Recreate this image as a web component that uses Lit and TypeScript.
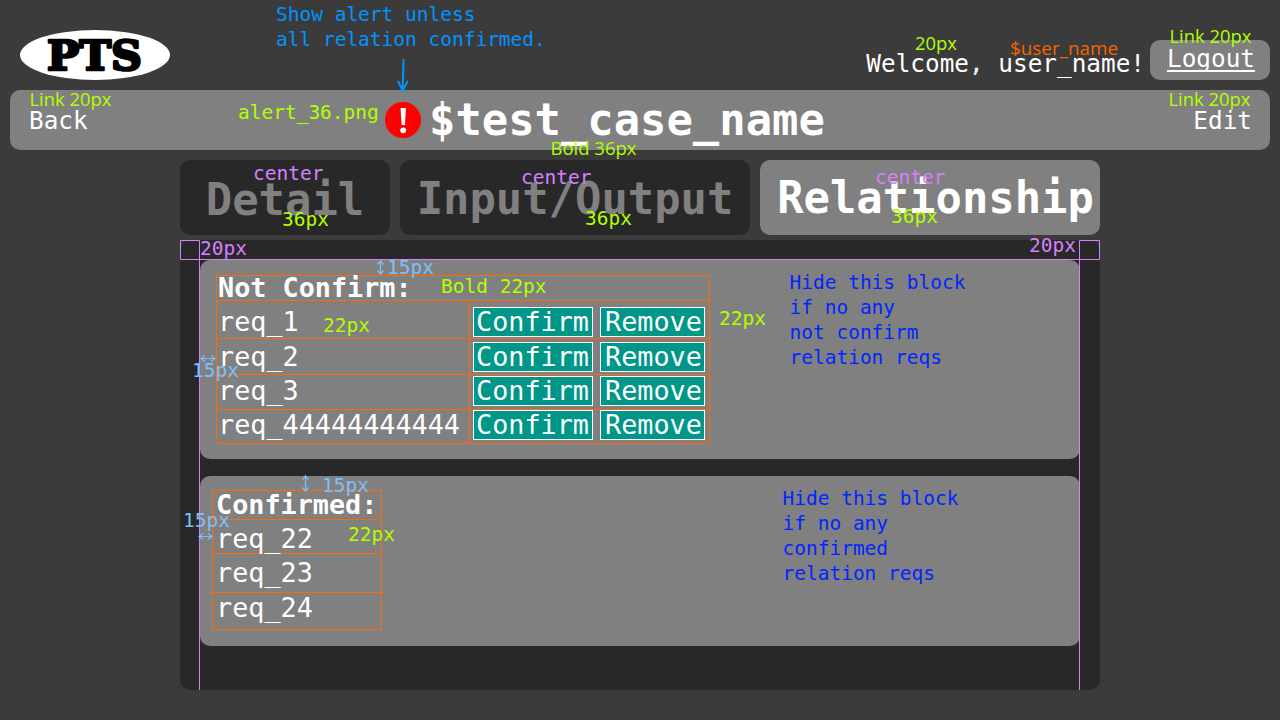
import { LitElement, html, svg, css } from "lit";
import { customElement } from "lit/decorators.js";

type Note = [text: string, x: number, y: number, color: string];

const LIME = "#b2ff00";
const PURPLE = "#d680ff";
const SKY = "#7cc0fb";
const BLUE = "#0026ff";
const AZURE = "#0094ff";
const PITCH = 11.73;

const monoNotes: Note[] = [
  ["Show alert unless", 276, 21, AZURE],
  ["all relation confirmed.", 276, 46, AZURE],
  ["alert_36.png", 238, 119, LIME],
  ["center", 253, 180, PURPLE],
  ["center", 521, 184, PURPLE],
  ["center", 875, 184, PURPLE],
  ["36px", 282, 226, LIME],
  ["36px", 585, 225, LIME],
  ["36px", 891, 223, LIME],
  ["20px", 200, 255, PURPLE],
  ["20px", 1029, 252, PURPLE],
  ["15px", 387, 274, SKY],
  ["Bold 22px", 441, 293, LIME],
  ["22px", 323, 332, LIME],
  ["22px", 719, 325, LIME],
  ["15px", 192, 377, SKY],
  ["Hide this block", 789.5, 289, BLUE],
  ["if no any", 789.5, 314, BLUE],
  ["not confirm", 789.5, 339, BLUE],
  ["relation reqs", 789.5, 364, BLUE],
  ["Hide this block", 782.5, 505, BLUE],
  ["if no any", 782.5, 530, BLUE],
  ["confirmed", 782.5, 555, BLUE],
  ["relation reqs", 782.5, 580, BLUE],
  ["15px", 322, 492, SKY],
  ["15px", 183, 527, SKY],
  ["22px", 348, 541, LIME],
];

const sansNotes: [...Note, number][] = [
  ["Link 20px", 29.5, 106, LIME, 82],
  ["20px", 915, 50, LIME, 42],
  ["$user_name", 1010, 55, "#f26500", 108],
  ["Link 20px", 1169.5, 43, LIME, 82],
  ["Link 20px", 1168.5, 106, LIME, 82],
  ["Bold 36px", 550.5, 155, LIME, 86],
];

@customElement("app-root")
export class AppRoot extends LitElement {
  static styles = css`
    :host {
      display: block;
      position: relative;
      width: 1280px;
      height: 720px;
      overflow: hidden;
      background: #3b3b3b;
      color: #fff;
      font-family: "DejaVu Sans Mono", monospace;
      font-size: 24.37px;
      white-space: pre;
    }
    .header {
      height: 90px;
      display: flex;
      align-items: flex-start;
      padding: 30px 10px 0 20px;
      box-sizing: border-box;
    }
    .logo { display: block; flex: none; }
    .welcome { margin: 19px 5px 0 auto; line-height: 30px; }
    .logout {
      margin-top: 10px;
      width: 120px;
      height: 40px;
      box-sizing: border-box;
      padding-left: 17px;
      border-radius: 10px;
      background: #808080;
      line-height: 37px;
    }
    .link {
      display: inline-block;
      height: 32px;
      box-sizing: border-box;
      border-bottom: 2px solid #fff;
    }
    .bar {
      display: flex;
      align-items: center;
      height: 60px;
      margin: 0 10px;
      padding: 0 18px 0 19px;
      box-sizing: border-box;
      border-radius: 10px;
      background: #808080;
      line-height: 60px;
    }
    .back { width: 356px; padding-top: 2px; }
    .alert { display: block; margin-right: 8px; }
    .title, .tab { font-size: 43.84px; font-weight: 700; }
    .edit { margin-left: auto; padding-top: 2px; }
    .tabs {
      display: grid;
      grid-template-columns: 210px 350px 340px;
      gap: 10px;
      width: 920px;
      margin: 10px auto 5px;
    }
    .tab {
      height: 75px;
      box-sizing: border-box;
      line-height: 75px;
      border-radius: 10px;
      background: #282828;
      color: #808080;
      display: flex;
      justify-content: center;
    }
    .detail { padding-top: 2px; }
    .io { padding-top: 1px; }
    .active { background: #808080; color: #fff; padding-left: 11px; }
    .panel {
      width: 920px;
      height: 450px;
      margin: 0 auto;
      padding: 20px;
      box-sizing: border-box;
      border-radius: 10px;
      background: #282828;
      display: flex;
      flex-direction: column;
      gap: 17px;
      font-size: 26.8px;
      line-height: 30px;
    }
    .block { border-radius: 10px; background: #808080; box-sizing: border-box; }
    .pending { height: 199px; padding: 13px 18px; }
    .confirmed { height: 170px; padding: 14px 16px; }
    .heading { font-weight: 700; height: 34px; }
    .rows {
      display: grid;
      grid-template-columns: 255px 120px 105px;
      grid-template-rows: 35px 34px 34px 30px;
    }
    .heading, .cell, .item { position: relative; z-index: 2; }
    .btn {
      height: 30px;
      box-sizing: border-box;
      border: 1px solid #fff;
      background: #009688;
      line-height: 28px;
      padding-left: 2px;
    }
    .remove { margin-left: 7px; width: 105px; padding-left: 4px; }
    .item { height: 34.4px; }
    .overlay { position: absolute; left: 0; top: 0; z-index: 1; pointer-events: none; }
    .notes { z-index: 3; }
    .mono { font-family: "DejaVu Sans Mono", monospace; font-size: 19.49px; }
    .sans { font-family: "Open Sans", "Noto Sans", sans-serif; font-size: 18.8px; }
    .pts {
      font-family: "DejaVu Serif", serif;
      font-weight: 700;
      font-size: 41px;
      stroke: #000;
      stroke-width: 2.6px;
      stroke-linejoin: round;
    }
    .grid { fill: none; stroke: #ff6a00; }
    .guide { fill: none; stroke: #d680ff; }
    .measure { fill: none; stroke: #7cc0fb; stroke-width: 1.2px; }
    .arrow { fill: none; stroke: #0094ff; stroke-width: 2px; }
  `;

  private logo() {
    return html`<svg class="logo" width="150" height="50" viewBox="0 0 150 50">
      <ellipse cx="75" cy="25" rx="75" ry="25" fill="#fff" />
      <text class="pts" x="27" y="40" textLength="95" lengthAdjust="spacingAndGlyphs">PTS</text>
    </svg>`;
  }

  private lines() {
    return html`<svg class="overlay" width="1280" height="720" viewBox="0 0 1280 720">
      <path class="guide" d="M180.5 240.5H199.5V259.5H180.5ZM1079.5 240.5H1099.5V259.5H1079.5ZM199.5 259.5H1079.5M199.5 259V690M1079.5 259V690" />
      <path class="grid" d="M216.5 275.5H709.5V443.5H216.5ZM216 300.5H709M215 338.5H709M216 374.5H709M216 409.5H709M469.5 299V443" />
      <path class="grid" d="M212.5 490.5H381.5V629.5H212.5ZM212 519.5H380M211 553.5H380M210 592.5H383" />
    </svg>`;
  }

  private notes() {
    return html`<svg class="overlay notes" width="1280" height="720" viewBox="0 0 1280 720">
      <path class="measure" d="M380.5 261V274M377.5 264.5L380.5 261L383.5 264.5M377.5 270.5L380.5 274L383.5 270.5" />
      <path class="measure" d="M201 358.5H215M205 355.5L201 358.5L205 361.5M211 355.5L215 358.5L211 361.5" />
      <path class="measure" d="M305.5 476V491M302.5 479.5L305.5 476L308.5 479.5M302.5 487.5L305.5 491L308.5 487.5" />
      <path class="measure" d="M199 536.5H212M203 533.5L199 536.5L203 539.5M208 533.5L212 536.5L208 539.5" />
      <path class="arrow" d="M403.6 59L402.6 90M398 81L402.6 90.5L407.8 81" />
      ${monoNotes.map(
        ([t, x, y, c]) => svg`<text class="mono" x=${x} y=${y} fill=${c} textLength=${t.length * PITCH}>${t}</text>`
      )}
      ${sansNotes.map(
        ([t, x, y, c, w]) =>
          svg`<text class="sans" x=${x} y=${y} fill=${c} textLength=${w} lengthAdjust="spacingAndGlyphs">${t}</text>`
      )}
    </svg>`;
  }

  render() {
    const pending = ["req_1", "req_2", "req_3", "req_44444444444"];
    const confirmed = ["req_22", "req_23", "req_24"];
    return html`<div class="header">${this.logo()}<div class="welcome">Welcome, user_name!</div><div class="logout"><span class="link">Logout</span></div></div><div class="bar"><div class="back">Back</div><svg class="alert" width="36" height="36" viewBox="0 0 36 36"><circle cx="18" cy="18" r="18" fill="#f00" /><path d="M15.6 6H20.9L20 23H16.6Z" fill="#fff" /><circle cx="18.2" cy="28.3" r="2.9" fill="#fff" /></svg><div class="title">$test_case_name</div><div class="edit">Edit</div></div><div class="tabs"><div class="tab detail">Detail</div><div class="tab io">Input/Output</div><div class="tab active">Relationship</div></div><div class="panel"><div class="block pending"><div class="heading">Not Confirm:</div><div class="rows">${pending.map(
      (r) => html`<div class="cell">${r}</div><div class="btn">Confirm</div><div class="btn remove">Remove</div>`
    )}</div></div><div class="block confirmed"><div class="heading">Confirmed:</div>${confirmed.map(
      (r) => html`<div class="item">${r}</div>`
    )}</div></div>${this.lines()}${this.notes()}`;
  }
}
